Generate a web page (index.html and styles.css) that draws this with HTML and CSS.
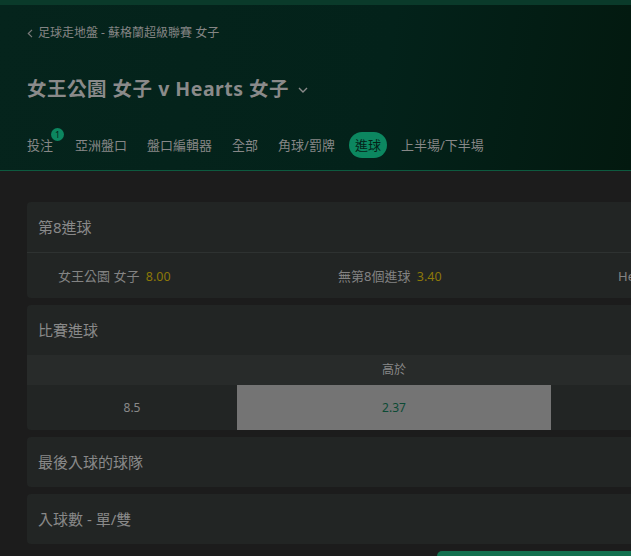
FILE: index.html
```html
<!DOCTYPE html>
<html lang="zh-Hant">
<head>
  <meta charset="UTF-8">
  <meta name="viewport" content="width=device-width, initial-scale=1.0">
  <title>女王公園 女子 v Hearts 女子</title>
  <link rel="stylesheet" href="styles.css">
</head>
<body>
  <div class="top-stripe"></div>
  <header class="event-header">
    <div class="breadcrumb">
      <svg class="back-icon" width="6" height="9" viewBox="0 0 6 9"><path d="M5 0.8 L1.3 4.5 L5 8.2" fill="none" stroke="#7a7a7a" stroke-width="1.2"/></svg>
      <span>足球走地盤 - 蘇格蘭超級聯賽 女子</span>
    </div>
    <h1 class="event-title">女王公園 女子 v Hearts 女子
      <svg class="title-caret" width="10" height="6" viewBox="0 0 10 6"><path d="M1 1 L5 5 L9 1" fill="none" stroke="#8a8a8a" stroke-width="1.4"/></svg>
    </h1>
    <nav class="tabs">
      <span class="tab first">投注<span class="badge">1</span></span>
      <span class="tab">亞洲盤口</span>
      <span class="tab">盤口編輯器</span>
      <span class="tab">全部</span>
      <span class="tab">角球/罰牌</span>
      <span class="tab active">進球</span>
      <span class="tab">上半場/下半場</span>
    </nav>
  </header>

  <main class="markets">
    <section class="card">
      <div class="card-title divided">第8進球</div>
      <div class="sel-row">
        <div class="sel">女王公園 女子 <span class="odds">8.00</span></div>
        <div class="sel">無第8個進球 <span class="odds">3.40</span></div>
        <div class="sel">Hearts 女子 <span class="odds">1.40</span></div>
      </div>
    </section>

    <section class="card">
      <div class="card-title">比賽進球</div>
      <div class="ou-head">
        <div class="ou-line"></div>
        <div class="ou-cell">高於</div>
        <div class="ou-cell">低於</div>
      </div>
      <div class="ou-row">
        <div class="ou-line">8.5</div>
        <div class="ou-cell picked">2.37</div>
        <div class="ou-cell">1.55</div>
      </div>
    </section>

    <section class="card">
      <div class="card-title">最後入球的球隊</div>
    </section>

    <section class="card">
      <div class="card-title">入球數 - 單/雙</div>
    </section>
  </main>

  <div class="betslip-tab"></div>
</body>
</html>
```

FILE: styles.css
```css
body {
  margin: 0;
  background-color: #1c1c1c;
  font-family: "Noto Sans", "Noto Sans CJK TC", sans-serif;
  color: #898989;
  overflow: hidden;
  height: 556px;
}

.top-stripe {
  height: 5px;
  background-color: #0a3a2a;
}

.event-header {
  background: linear-gradient(100deg, #05241c 0%, #03221a 60%, #03190f 100%);
  border-bottom: 1px solid #0d5a3f;
  padding: 20px 0 12px 27px;
  height: 133px;
}

.breadcrumb {
  display: flex;
  align-items: center;
  gap: 5px;
  font-size: 12px;
  line-height: 16px;
  color: #858585;
}

.event-title {
  margin: 36px 0 0 0;
  font-size: 19.5px;
  letter-spacing: 0.5px;
  line-height: 24px;
  font-weight: bold;
  color: #8a8a8a;
  display: flex;
  align-items: center;
  gap: 9px;
}

.title-caret {
  margin-top: 2px;
}

.tabs {
  display: flex;
  gap: 8px;
  margin: 31px 0 0 -6px;
  font-size: 13px;
}

.tab {
  position: relative;
  padding: 0 6px;
  height: 26px;
  line-height: 26px;
  border-radius: 13px;
  color: #878787;
  white-space: nowrap;
}

.tab.first {
  margin-right: 2px;
}

.tab.active {
  background-color: #0c8760;
  color: #052117;
}

.badge {
  position: absolute;
  left: 30px;
  top: -4px;
  width: 13px;
  height: 13px;
  border-radius: 50%;
  background-color: #0c8760;
  color: #06241a;
  font-size: 9px;
  line-height: 13px;
  text-align: center;
}

.markets {
  display: flex;
  flex-direction: column;
  gap: 7px;
  padding: 31px 0 0 27px;
}

.card {
  width: 840px;
  background-color: #222524;
  border-radius: 4px;
  overflow: hidden;
}

.card-title {
  height: 50px;
  line-height: 50px;
  padding-left: 11px;
  font-size: 15px;
  color: #898989;
}

.card-title.divided {
  border-bottom: 1px solid #2e3231;
}

.sel-row {
  display: flex;
  height: 45px;
  align-items: center;
  font-size: 13px;
}

.sel {
  width: 280px;
  padding-left: 31px;
  box-sizing: border-box;
  white-space: nowrap;
  color: #838383;
}

.odds {
  color: #8c7808;
  margin-left: 3px;
  font-size: 12.5px;
}

.ou-head,
.ou-row {
  display: flex;
  font-size: 12px;
}

.ou-head {
  height: 30px;
  line-height: 30px;
  background-color: #282b2a;
}

.ou-row {
  height: 45px;
  line-height: 45px;
}

.ou-line {
  width: 210px;
  text-align: center;
}

.ou-cell {
  width: 314px;
  text-align: center;
}

.ou-row .ou-cell:last-child {
  color: #222524;
}

.ou-head .ou-cell:last-child {
  color: #282b2a;
}

.ou-cell.picked {
  background-color: #747474;
  color: #0c4a34;
}

.betslip-tab {
  position: fixed;
  left: 437px;
  top: 551px;
  width: 260px;
  height: 30px;
  background-color: #12704f;
  border-radius: 5px 0 0 0;
}
```
